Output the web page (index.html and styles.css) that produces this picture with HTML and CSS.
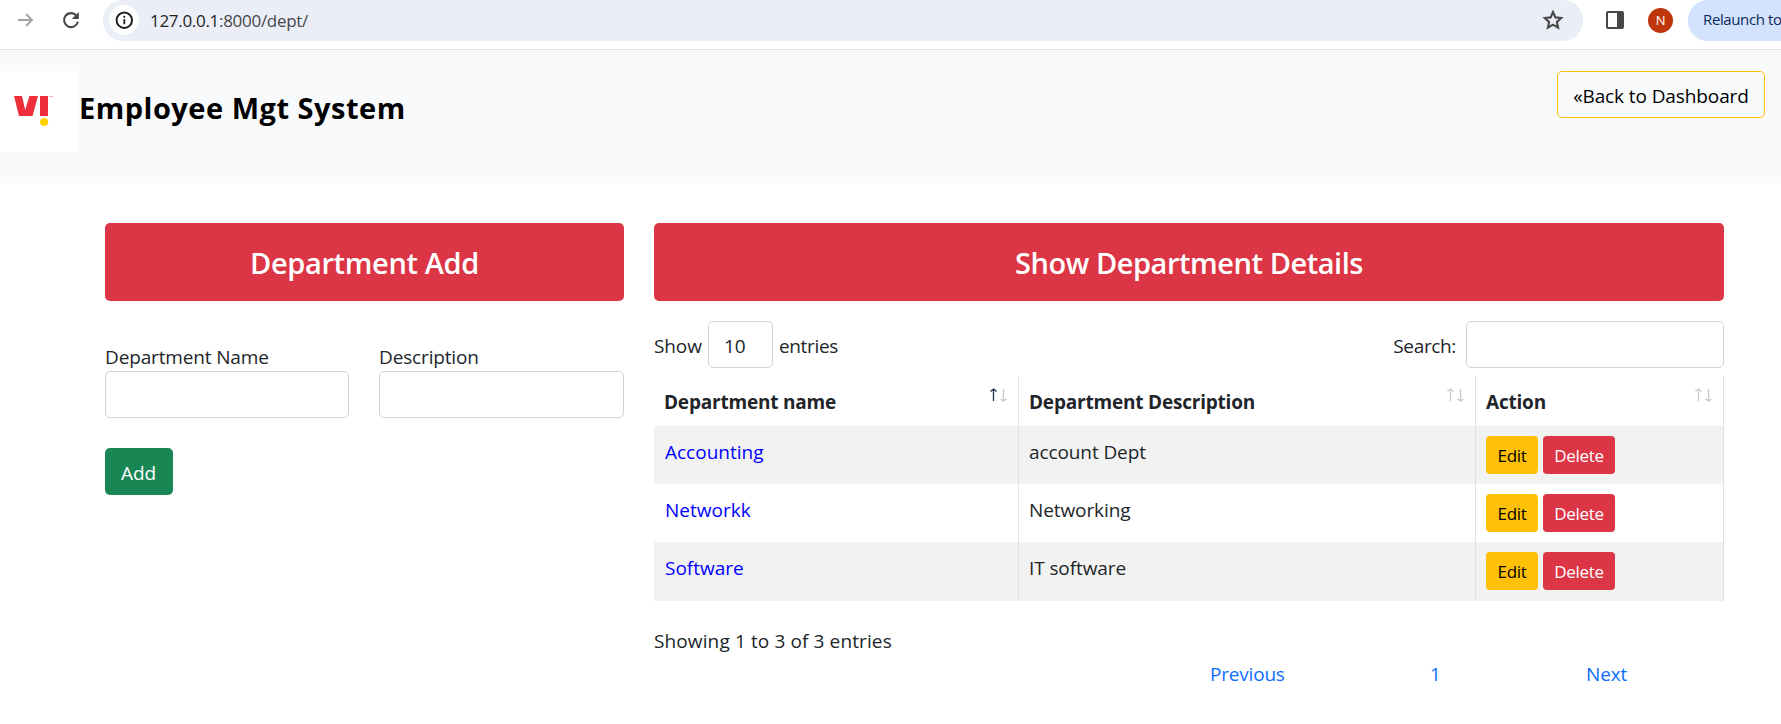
FILE: index.html
```html
<!DOCTYPE html>
<html lang="en">
<head>
<meta charset="utf-8">
<title>Employee Mgt System</title>
<link rel="stylesheet" href="styles.css">
</head>
<body>
<div class="toolbar">
  <svg class="tool-forward" width="20" height="20" viewBox="0 0 20 20"><path d="M2 10H16M10 4l6 6-6 6" fill="none" stroke="#a3a3a3" stroke-width="1.9"/></svg>
  <svg class="tool-reload" width="20" height="20" viewBox="0 0 20 20"><path d="M15.400 5.600A7 7 0 1 0 16.900 11.600" fill="none" stroke="#474747" stroke-width="2.1"/><path d="M17.800 2v7h-7z" fill="#474747"/></svg>
  <div class="omnibox">
    <span class="site-info"><svg width="20" height="20" viewBox="0 0 20 20"><circle cx="10.300" cy="10.200" r="7.700" fill="none" stroke="#1f1f1f" stroke-width="2"/><path d="M10.300 9.200v5" stroke="#1f1f1f" stroke-width="1.8"/><circle cx="10.300" cy="6.800" r="1.100" fill="#1f1f1f"/></svg></span>
    <span class="url"><span class="host">127.0.0.1</span>:8000/dept/</span>
    <svg class="star" width="22" height="22" viewBox="0 0 22 22"><path d="M11 3l2.400 5.400 5.800.6-4.300 3.900 1.200 5.800L11 15.700l-5.100 3 1.200-5.800L2.800 9l5.800-.6z" fill="none" stroke="#474747" stroke-width="2.1"/></svg>
  </div>
  <svg class="panel" width="18" height="18" viewBox="0 0 18 18"><rect x="1" y="1" width="16" height="16" rx="1" fill="none" stroke="#474747" stroke-width="2"/><path d="M11 1h6v16h-6z" fill="#474747"/></svg>
  <span class="avatar">N</span>
  <span class="relaunch">Relaunch to</span>
</div>
<header class="header">
  <div class="logo"><svg width="79" height="81" viewBox="0 0 79 81"><path d="M14 25h8l3.200 14L29.500 25H38l-5.500 20H19zM40 25h8v20h-8z" fill="#ee2e3b"/><circle cx="44.200" cy="51" r="4.100" fill="#ffd200"/><path d="M49 25.500h1.500M51 25.500h2" stroke="#f4a0a6"/></svg></div>
  <h1 class="title">Employee Mgt System</h1>
  <a class="back">«Back to Dashboard</a>
</header>
<main class="main">
  <section class="add">
    <h2 class="banner banner-add">Department Add</h2>
    <div class="fields">
      <label class="field"><span class="label">Department Name</span><input class="control" type="text"></label>
      <label class="field"><span class="label">Description</span><input class="control" type="text"></label>
    </div>
    <button class="btn-add">Add</button>
  </section>
  <section class="list">
    <h2 class="banner">Show Department Details</h2>
    <div class="filters">
      <span class="show">Show</span><span class="length">10</span><span class="entries">entries</span>
      <span class="search">Search:</span><input class="control search-box" type="text">
    </div>
    <table class="table">
      <colgroup><col class="c1"><col class="c2"><col class="c3"></colgroup>
      <thead><tr>
        <th><div class="th"><span>Department name</span><svg class="sort asc" width="18" height="14" viewBox="0 0 18 14"><path class="up" d="M4.500 1v12M1.500 3.500l3-2.500 3 2.500"/><path class="down" d="M14.500 1v12M11.500 11l3 2 3-2"/></svg></div></th>
        <th><div class="th"><span>Department Description</span><svg class="sort" width="18" height="14" viewBox="0 0 18 14"><path class="up" d="M4.500 1v12M1.500 3.500l3-2.500 3 2.500"/><path class="down" d="M14.500 1v12M11.500 11l3 2 3-2"/></svg></div></th>
        <th><div class="th"><span>Action</span><svg class="sort" width="18" height="14" viewBox="0 0 18 14"><path class="up" d="M4.500 1v12M1.500 3.500l3-2.500 3 2.500"/><path class="down" d="M14.500 1v12M11.500 11l3 2 3-2"/></svg></div></th>
      </tr></thead>
      <tbody>
        <tr><td class="name">Accounting</td><td>account Dept</td><td><div class="actions"><button class="btn edit">Edit</button><button class="btn delete">Delete</button></div></td></tr>
        <tr><td class="name">Networkk</td><td>Networking</td><td><div class="actions"><button class="btn edit">Edit</button><button class="btn delete">Delete</button></div></td></tr>
        <tr><td class="name">Software</td><td>IT software</td><td><div class="actions"><button class="btn edit">Edit</button><button class="btn delete">Delete</button></div></td></tr>
      </tbody>
    </table>
    <p class="info">Showing 1 to 3 of 3 entries</p>
    <nav class="pages"><a class="prev">Previous</a><a class="page">1</a><a>Next</a></nav>
  </section>
</main>
</body>
</html>
```
FILE: styles.css
```css
* { box-sizing: border-box; }
body {
  margin: 0;
  background: #fff;
  color: #212529;
  font: 19px/30px "Open Sans", "Noto Sans", sans-serif;
  letter-spacing: -0.1px;
  overflow: hidden;
  height: 724px;
}
button, input { font: inherit; letter-spacing: inherit; }
h1, h2, p { margin: 0; }
svg { display: block; flex: none; }

.toolbar { display: flex; height: 50px; border-bottom: 1px solid #dfe3e5; overflow: hidden; }
.tool-forward { margin: 10px 0 0 16px; }
.tool-reload { margin: 10px 0 0 25px; }
.omnibox {
  display: flex; flex: none; width: 1480px; height: 41px; margin-left: 22px;
  border-radius: 20px; background: #ebeef7;
}
.site-info { display: grid; place-items: center; width: 30px; height: 30px; margin: 5px 0 0 6px; border-radius: 50%; background: #fff; }
.url { margin: 6px 0 0 11px; font-size: 17px; letter-spacing: -0.3px; color: #474747; }
.host { color: #1f1f1f; }
.star { margin: 9px 19px 0 auto; }
.panel { margin: 11px 0 0 23px; }
.avatar {
  flex: none; width: 25px; height: 25px; margin: 8px 0 0 24px; border-radius: 50%;
  background: #bf360c; color: #fff; font-size: 13px; line-height: 25px; text-align: center;
}
.relaunch {
  flex: none; width: 93px; height: 41px; margin-left: 15px; padding-left: 15px; border-radius: 20px 0 0 20px;
  background: #d3e3fd; color: #0b2a5c; font-size: 15px; line-height: 39px; letter-spacing: -0.38px; white-space: nowrap;
}

.header { display: flex; align-items: flex-start; height: 133px; padding-top: 21px; background: #f8fafc; }
.logo { width: 79px; height: 81px; background: #fff; }
.title { margin-top: 17px; color: #000; font-size: 29px; line-height: 40px; font-weight: 700; letter-spacing: 0.5px; }
.back {
  width: 208px; height: 47px; margin: 0 16px 0 auto; border: 1px solid #ffc107; border-radius: 5px;
  color: #000; line-height: 48px; text-align: center; white-space: nowrap;
}

.main { display: flex; gap: 30px; padding: 40px 0 0 105px; }
.add { width: 519px; }
.list { width: 1070px; }
.banner {
  height: 78px; border-radius: 5px; background: #dc3545; color: #fff;
  font-size: 29px; line-height: 80px; font-weight: 600; letter-spacing: -0.45px; text-align: center;
}
.banner-add { letter-spacing: -0.35px; }
.fields { display: grid; grid-template-columns: 244px 245px; gap: 30px; margin-top: 40px; }
.field { display: flex; flex-direction: column; min-width: 0; }
.label { height: 30px; line-height: 32px; letter-spacing: -0.15px; }
.control { width: 100%; height: 47px; border: 1px solid #ced4da; border-radius: 5px; background: #fff; }
.btn-add {
  width: 68px; height: 47px; margin-top: 30px; padding: 2px 1px 0 0; border: 0; border-radius: 5px;
  background: #198754; color: #fff; display: block;
}
.filters { display: flex; margin-top: 20px; line-height: 51px; height: 47px; }
.show { width: 54px; }
.length { width: 65px; height: 47px; padding-left: 15px; border: 1px solid #ced4da; border-radius: 5px; line-height: 49px; }
.entries { margin-left: 6px; letter-spacing: -0.35px; }
.search { margin-left: auto; letter-spacing: -0.35px; }
.search-box { width: 258px; height: 47px; margin-left: 10px; }

.table { width: 1070px; margin-top: 8px; border-collapse: separate; border-spacing: 0; table-layout: fixed; }
.c1 { width: 365px; }
.c2 { width: 457px; }
.c3 { width: 248px; }
.table th, .table td { padding: 10px 11px 8px 10px; border-right: 1px solid #dee2e6; text-align: left; vertical-align: top; line-height: 32px; }
.table th { height: 50px; font-weight: 700; letter-spacing: -0.2px; }
.table td { height: 58px; }
.table tr:last-child td { height: 59px; }
.table tbody tr:nth-child(odd) { background: #f2f2f2; }
.th { display: flex; height: 32px; justify-content: space-between; }
.sort { margin-top: 2px; fill: none; stroke: #c8c9ca; stroke-width: 1.3; }
.asc .up { stroke: #212f45; }
.table .name { padding-left: 11px; color: #0000ff; letter-spacing: 0; }
.actions { display: flex; gap: 5px; height: 38px; }
.btn { height: 38px; padding: 1px 0 0; border: 0; border-radius: 4px; font-size: 17px; letter-spacing: -0.3px; }
.edit { width: 52px; background: #ffc107; color: #000; }
.delete { width: 72px; background: #dc3545; color: #fff; }
.info { margin-top: 25px; letter-spacing: 0.12px; }
.pages { display: flex; margin: 3px 0 0 556px; color: #0d6efd; }
.prev { width: 220px; letter-spacing: -0.2px; }
.page { width: 156px; }
```
